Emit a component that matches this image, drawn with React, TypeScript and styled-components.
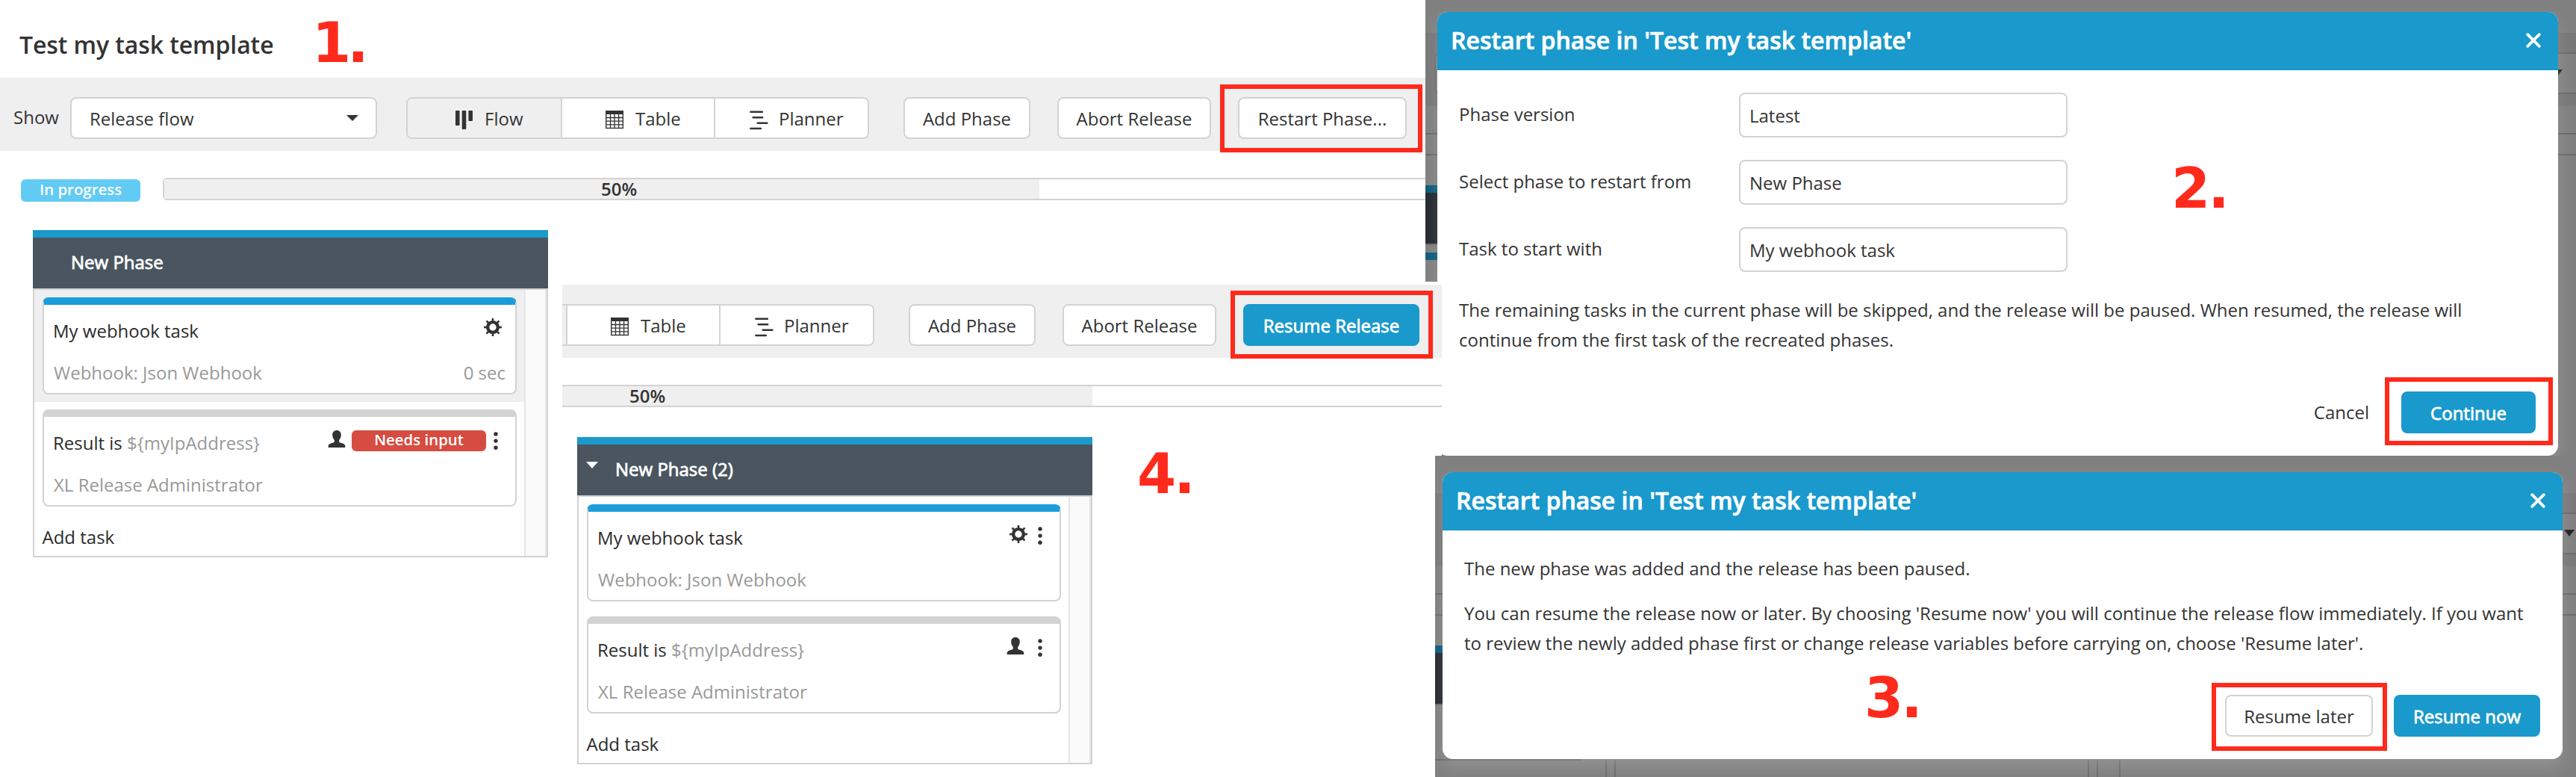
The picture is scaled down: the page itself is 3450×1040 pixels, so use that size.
import React from "react";
import styled, { createGlobalStyle, css } from "styled-components";

const c = {
  text: "#333333",
  muted: "#999999",
  border: "#d3d3d3",
  panel: "#efefef",
  blue: "#1999cc",
  bar: "#1b9dda",
  slate: "#4a5560",
  red: "#ff2a1c",
  overlay: "#808080",
  overlayLine: "#6a6a6a",
};

const GlobalStyle = createGlobalStyle`
  *, *::before, *::after { box-sizing: border-box; }
  body {
    margin: 0;
    background: #fff;
    color: ${c.text};
    font: 24px/40px "Open Sans", "Noto Sans", sans-serif;
  }
  p { margin: 0; }
`;

const strong = css`
  -webkit-text-stroke: 0.8px currentColor;
`;

/* ---------- canvas with the overlapping windows ---------- */

const Canvas = styled.main`
  position: relative;
  width: 3450px;
  height: 1040px;
  overflow: hidden;
  background: #fff;
  white-space: nowrap;
`;

const Window = styled.section<{ $x: number; $y: number; $w: number; $h: number }>`
  position: absolute;
  left: ${(p) => p.$x}px;
  top: ${(p) => p.$y}px;
  width: ${(p) => p.$w}px;
  height: ${(p) => p.$h}px;
  overflow: hidden;
  background: #fff;
`;

const StepNumber = styled.span<{ $x: number; $y: number; $tight?: boolean }>`
  position: absolute;
  left: ${(p) => p.$x}px;
  top: ${(p) => p.$y}px;
  color: ${c.red};
  font: bold 75px/88px "DejaVu Sans", Verdana, sans-serif;
  letter-spacing: ${(p) => (p.$tight ? -5 : -3)}px;
`;

const Highlight = styled.div<{ $x: number; $y: number; $w: number; $h: number }>`
  position: absolute;
  left: ${(p) => p.$x}px;
  top: ${(p) => p.$y}px;
  width: ${(p) => p.$w}px;
  height: ${(p) => p.$h}px;
  border: 6px solid ${c.red};
`;

/* ---------- release page ---------- */

const TitleRow = styled.header`
  display: flex;
  align-items: center;
  height: 104px;
  padding: 15px 0 0 26px;
`;

const Title = styled.h1`
  margin: 0;
  font-size: 32px;
  font-weight: 600;
  letter-spacing: -0.1px;
  line-height: 44px;
`;

const Toolbar = styled.div`
  display: flex;
  align-items: flex-start;
  height: 98px;
  padding-top: 26px;
  background: ${c.panel};
`;

const LowerToolbar = styled(Toolbar)`
  margin-top: 4px;
`;

const ShowLabel = styled.label`
  width: 94px;
  padding-left: 18px;
  line-height: 54px;
`;

const Select = styled.div`
  display: flex;
  align-items: center;
  justify-content: space-between;
  width: 411px;
  height: 56px;
  margin-right: 39px;
  padding: 1px 23px 0 24px;
  border: 2px solid ${c.border};
  border-radius: 8px;
  background: #fff;
`;

const Caret = styled.i<{ $w: number; $h: number; $color: string }>`
  width: 0;
  height: 0;
  margin-bottom: 2px;
  border: solid transparent;
  border-width: ${(p) => p.$h}px ${(p) => p.$w / 2}px 0;
  border-top-color: ${(p) => p.$color};
`;

const ViewSwitch = styled.div`
  display: flex;
  height: 56px;
  overflow: hidden;
  border: 2px solid ${c.border};
  border-radius: 8px;
  background: #fff;
`;

const ViewSwitchTail = styled(ViewSwitch)`
  border-left: 0;
  border-radius: 0 8px 8px 0;
`;

const ViewTab = styled.div<{ $w: number; $active?: boolean; $pad: number; $gap: number }>`
  display: flex;
  align-items: center;
  width: ${(p) => p.$w}px;
  padding: 2px 0 0 ${(p) => p.$pad}px;
  gap: ${(p) => p.$gap}px;
  background: ${(p) => (p.$active ? c.panel : "#fff")};
  & + & {
    border-left: 2px solid ${c.border};
  }
  svg {
    flex: none;
    margin-top: 3px;
  }
`;

const Button = styled.button<{ $w: number; $ml?: number; $primary?: boolean }>`
  width: ${(p) => p.$w}px;
  height: 56px;
  margin: 0 0 0 ${(p) => p.$ml ?? 0}px;
  padding: 1px 0 0;
  border: 2px solid ${(p) => (p.$primary ? c.blue : c.border)};
  border-radius: 8px;
  background: ${(p) => (p.$primary ? c.blue : "#fff")};
  color: ${(p) => (p.$primary ? "#fff" : c.text)};
  font: inherit;
  ${(p) => p.$primary && strong}
`;

const ProgressRow = styled.div<{ $pl: number }>`
  display: flex;
  align-items: center;
  height: 30px;
  margin-top: 36px;
  padding-left: ${(p) => p.$pl}px;
`;

const Pill = styled.span<{ $w: number; $h: number; $bg: string }>`
  width: ${(p) => p.$w}px;
  height: ${(p) => p.$h}px;
  border-radius: 6px;
  background: ${(p) => p.$bg};
  color: #fff;
  font-size: 20.4px;
  font-weight: 600;
  line-height: ${(p) => p.$h - 3}px;
  text-align: center;
`;

const StatusPill = styled(Pill)`
  margin: 4px 30px 0 0;
  line-height: 26px;
`;

const ProgressBar = styled.div<{ $open?: boolean }>`
  flex: 1;
  height: 30px;
  border: 2px solid ${c.border};
  border-right: 0;
  ${(p) => (p.$open ? "border-left: 0;" : "border-radius: 6px 0 0 6px;")}
`;

const ProgressFill = styled.div<{ $w: number; $pl: number }>`
  width: ${(p) => p.$w}px;
  height: 26px;
  padding-left: ${(p) => p.$pl}px;
  background: ${c.panel};
  font-weight: 600;
  line-height: 26px;
`;

/* ---------- phase column ---------- */

const PhaseBox = styled.div<{ $ml: number }>`
  width: 690px;
  margin: 40px 0 0 ${(p) => p.$ml}px;
`;

const PhaseHead = styled.div`
  display: flex;
  align-items: center;
  height: 78px;
  border-top: 10px solid ${c.blue};
  background: ${c.slate};
  color: #fff;
`;

const PhaseToggle = styled.span`
  display: flex;
  width: 51px;
  padding: 0 0 12px 12px;
`;

const PhaseName = styled.span`
  padding-bottom: 2px;
  ${strong}
`;

const PhaseBody = styled.div`
  display: flex;
  height: 360px;
  border: 2px solid ${c.border};
`;

const TaskList = styled.div`
  width: 656px;
`;

const Gutter = styled.div`
  flex: 1;
  border: solid #e6e6e6;
  border-width: 0 2px;
  background: #fafafa;
`;

const TaskSlot = styled.div<{ $current?: boolean }>`
  padding: 10px 10px 10px 11px;
  height: 150px;
  background: ${(p) => (p.$current ? c.panel : "#fff")};
`;

const Card = styled.div<{ $bar: string }>`
  width: 635px;
  height: 130px;
  border: 2px solid ${c.border};
  border-top: 10px solid ${(p) => p.$bar};
  border-radius: 8px;
  background: #fff;
`;

const CardTop = styled.div`
  display: flex;
  justify-content: space-between;
  height: 69px;
  padding-left: 12px;
  color: #2b2b2b;
  line-height: 69px;
`;

const CardBottom = styled.div`
  display: flex;
  justify-content: space-between;
  padding: 0 13px;
  color: ${c.muted};
  line-height: 43px;
`;

const Muted = styled.span`
  color: ${c.muted};
`;

const Actions = styled.div<{ $pr: number; $gap: number }>`
  display: flex;
  align-items: center;
  height: 60px;
  gap: ${(p) => p.$gap}px;
  padding-right: ${(p) => p.$pr}px;
`;

const NeedsInput = styled(Pill)`
  margin: 4px 2px 0 0;
`;

const IconSlot = styled.span`
  display: flex;
  margin-top: 3px;
`;

const AddTask = styled.div`
  padding: 5px 0 0 10.5px;
  color: #2b2b2b;
  line-height: 52px;
`;

/* ---------- dimmed page behind the dialogs ---------- */

const DimPage = styled.div<{ $top: number }>`
  display: flex;
  flex-direction: column;
  height: 100%;
  padding-top: ${(p) => p.$top}px;
  background: ${c.overlay};
`;

const DimToolbar = styled.div`
  display: flex;
  justify-content: space-between;
  flex: none;
  height: 98px;
  padding: 26px 0 0 12px;
  background: #787878;
`;

const DimButton = styled.div`
  width: 120px;
  height: 56px;
  border: 2px solid #6e6e6e;
  border-radius: 8px;
  background: ${c.overlay};
`;

const DimSelect = styled.div<{ $pr: number }>`
  display: flex;
  justify-content: flex-end;
  align-items: center;
  width: 300px;
  height: 56px;
  padding-right: ${(p) => p.$pr}px;
  border: solid ${c.overlayLine};
  border-width: 2px 0;
  background: ${c.overlay};
`;

const DimProgress = styled.div`
  flex: none;
  height: 30px;
  margin-top: 36px;
  border: solid ${c.overlayLine};
  border-width: 2px 0;
`;

const DimPhase = styled.div`
  flex: none;
  width: 196px;
  height: 154px;
  margin-top: 40px;
  border-bottom: 2px solid ${c.overlayLine};
`;

const DimPhaseHead = styled.div`
  height: 80px;
  border-top: 10px solid #0e5c7b;
  border-bottom: 2px solid ${c.overlayLine};
  background: #252a30;
`;

const DimCard = styled.div`
  height: 10px;
  margin-top: 10px;
  background: #0e5c7b;
`;

const DimColumns = styled.div`
  display: flex;
  flex: 1;
`;

const DimColumn = styled.div<{ $w: number }>`
  width: ${(p) => p.$w}px;
  border-right: 2px solid #6c6c6c;
`;

/* ---------- dialog ---------- */

const Dialog = styled.div<{ $x: number; $y: number; $w: number; $h: number }>`
  position: absolute;
  left: ${(p) => p.$x}px;
  top: ${(p) => p.$y}px;
  width: ${(p) => p.$w}px;
  height: ${(p) => p.$h}px;
  overflow: hidden;
  border-radius: 14px;
  background: #fff;
  box-shadow: 0 10px 20px rgba(255, 255, 255, 0.15);
`;

const DialogHead = styled.div`
  display: flex;
  align-items: center;
  justify-content: space-between;
  height: 78px;
  padding: 0 23px 2px 18px;
  background: ${c.blue};
  color: #fff;
`;

const DialogTitle = styled.h2`
  margin: 0;
  font-size: 32px;
  font-weight: 600;
  line-height: 44px;
  -webkit-text-stroke: 0.7px currentColor;
`;

const Form = styled.div`
  display: flex;
  flex-direction: column;
  gap: 30px;
  padding: 30px 0 0 29px;
`;

const FormRow = styled.div`
  display: flex;
  align-items: center;
  height: 60px;
`;

const FormLabel = styled.label`
  width: 375px;
  padding-bottom: 2px;
`;

const Field = styled.div`
  width: 440px;
  height: 60px;
  padding-left: 12px;
  border: 2px solid ${c.border};
  border-radius: 8px;
  line-height: 57px;
`;

const Copy = styled.div`
  display: flex;
  flex-direction: column;
  gap: 20px;
  padding: 31px 0 0 29px;
`;

const Footer = styled.div`
  display: flex;
  justify-content: flex-end;
  align-items: center;
  margin-top: 49px;
  padding-right: 30px;
`;

const Cancel = styled.span`
  margin-right: 43px;
`;

/* ---------- icons ---------- */

const FlowIcon = () => (
  <svg width="23" height="25" viewBox="0 0 23 25" fill={c.text}>
    <rect x="0" y="0" width="5.6" height="20" rx="1" />
    <rect x="8.7" y="0" width="5.6" height="25" rx="1" />
    <rect x="17.4" y="0" width="5.6" height="14" rx="1" />
  </svg>
);

const TableIcon = () => (
  <svg width="24" height="25" viewBox="0 0 24 25" fill="none" stroke={c.text}>
    <rect x="0.7" y="0.7" width="22.6" height="22.8" strokeWidth="1.4" />
    <rect x="0" y="0" width="24" height="5" fill={c.text} stroke="none" />
    <path d="M6.5 4v20M12 4v20M17.6 4v20M0 9.5h24M0 14.2h24M0 18.9h24" strokeWidth="1.3" />
  </svg>
);

const PlannerIcon = () => (
  <svg width="25" height="26" viewBox="0 0 25 26" stroke={c.text} strokeWidth="2.4" strokeLinecap="round">
    <path d="M1.3 1.8h15.6M4.6 9.2h12.6M10.6 16.7h12.8M1.3 24h13.6" />
  </svg>
);

const spokes = [0, 45, 90, 135, 180, 225, 270, 315];

const GearIcon = () => (
  <svg width="24" height="24" viewBox="0 0 24 24">
    <circle cx="12" cy="12" r="6.9" fill="none" stroke={c.text} strokeWidth="4.4" />
    {spokes.map((a) => (
      <rect key={a} x="10.7" y="0" width="2.6" height="4.5" fill={c.text} transform={`rotate(${a} 12 12)`} />
    ))}
  </svg>
);

const UserIcon = () => (
  <svg width="24" height="24" viewBox="0 0 24 24" fill={c.text}>
    <path d="M12 0c3.6 0 5.8 2.4 5.8 6 0 2.9-1 5.3-2.6 7v1.9c0 .9.6 1.3 1.6 1.6 3.7 1.1 6.5 2.1 6.5 4.6v1.9H.7v-1.9c0-2.5 2.8-3.5 6.5-4.6 1-.3 1.6-.7 1.6-1.6V13C7.2 11.3 6.2 8.9 6.2 6c0-3.6 2.2-6 5.8-6z" />
  </svg>
);

const DotsIcon = () => (
  <svg width="6" height="24" viewBox="0 0 6 24" fill={c.text}>
    <circle cx="3" cy="2.9" r="2.7" />
    <circle cx="3" cy="12.1" r="2.7" />
    <circle cx="3" cy="21.3" r="2.7" />
  </svg>
);

const CloseIcon = () => (
  <svg width="20" height="20" viewBox="0 0 20 20" stroke="#fff" strokeWidth="3.8" strokeLinecap="round">
    <path d="M2.2 2.2l15.6 15.6M17.8 2.2L2.2 17.8" />
  </svg>
);

/* ---------- composed parts ---------- */

const TableAndPlanner = () => (
  <>
    <ViewTab $w={205} $pad={58} $gap={16}>
      <TableIcon />
      Table
    </ViewTab>
    <ViewTab $w={206} $pad={46} $gap={14}>
      <PlannerIcon />
      Planner
    </ViewTab>
  </>
);

type PhaseProps = { name: string; x: number; running?: boolean };

const Phase = ({ name, x, running }: PhaseProps) => (
  <PhaseBox $ml={x}>
    <PhaseHead>
      <PhaseToggle>{!running && <Caret $w={17} $h={9} $color="#fff" />}</PhaseToggle>
      <PhaseName>{name}</PhaseName>
    </PhaseHead>
    <PhaseBody>
      <TaskList>
        <TaskSlot $current={running}>
          <Card $bar={c.bar}>
            <CardTop>
              <span>My webhook task</span>
              <Actions $pr={running ? 18 : 23} $gap={14}>
                <GearIcon />
                {!running && (
                  <IconSlot>
                    <DotsIcon />
                  </IconSlot>
                )}
              </Actions>
            </CardTop>
            <CardBottom>
              <span>Webhook: Json Webhook</span>
              {running && <span>0 sec</span>}
            </CardBottom>
          </Card>
        </TaskSlot>
        <TaskSlot>
          <Card $bar={c.border}>
            <CardTop>
              <span>
                Result is <Muted>{"${myIpAddress}"}</Muted>
              </span>
              <Actions $pr={23} $gap={running ? 8 : 18}>
                <UserIcon />
                {running && (
                  <NeedsInput $w={180} $h={28} $bg="#d64c41">
                    Needs input
                  </NeedsInput>
                )}
                <IconSlot>
                  <DotsIcon />
                </IconSlot>
              </Actions>
            </CardTop>
            <CardBottom>
              <span>XL Release Administrator</span>
            </CardBottom>
          </Card>
        </TaskSlot>
        <AddTask>Add task</AddTask>
      </TaskList>
      <Gutter />
    </PhaseBody>
  </PhaseBox>
);

const DimBackdrop = ({ top, caret, withCard }: { top: number; caret: number; withCard?: boolean }) => (
  <DimPage $top={top}>
    <DimToolbar>
      <DimButton />
      <DimSelect $pr={caret}>
        <Caret $w={15} $h={9} $color="#222" />
      </DimSelect>
    </DimToolbar>
    <DimProgress />
    <DimPhase>
      <DimPhaseHead />
      {withCard && <DimCard />}
    </DimPhase>
    {!withCard && (
      <DimColumns>
        <DimColumn $w={230} />
        <DimColumn $w={12} />
        <DimColumn $w={634} />
        <DimColumn $w={12} />
        <DimColumn $w={30} />
      </DimColumns>
    )}
  </DimPage>
);

const dialogTitle = "Restart phase in 'Test my task template'";

const fields = [
  ["Phase version", "Latest"],
  ["Select phase to restart from", "New Phase"],
  ["Task to start with", "My webhook task"],
];

export default function App() {
  return (
    <Canvas>
      <GlobalStyle />

      <Window $x={0} $y={0} $w={1909} $h={1040}>
        <TitleRow>
          <Title>Test my task template</Title>
        </TitleRow>
        <Toolbar>
          <ShowLabel>Show</ShowLabel>
          <Select>
            Release flow
            <Caret $w={16} $h={8} $color={c.text} />
          </Select>
          <ViewSwitch>
            <ViewTab $w={205} $pad={64} $gap={16} $active>
              <FlowIcon />
              Flow
            </ViewTab>
            <TableAndPlanner />
          </ViewSwitch>
          <Button $w={170} $ml={46}>Add Phase</Button>
          <Button $w={206} $ml={36}>Abort Release</Button>
          <Button $w={226} $ml={36}>Restart Phase...</Button>
        </Toolbar>
        <ProgressRow $pl={28}>
          <StatusPill $w={160} $h={30} $bg="#62cbf3">In progress</StatusPill>
          <ProgressBar>
            <ProgressFill $w={1172} $pl={585}>50%</ProgressFill>
          </ProgressBar>
        </ProgressRow>
        <Phase name="New Phase" x={44} running />
      </Window>

      <Window $x={1909} $y={0} $w={1541} $h={610}>
        <DimBackdrop top={44} caret={18} withCard />
        <Dialog $x={16} $y={16} $w={1501} $h={594}>
          <DialogHead>
            <DialogTitle>{dialogTitle}</DialogTitle>
            <CloseIcon />
          </DialogHead>
          <Form>
            {fields.map(([label, value]) => (
              <FormRow key={label}>
                <FormLabel>{label}</FormLabel>
                <Field>{value}</Field>
              </FormRow>
            ))}
          </Form>
          <Copy>
            <p>
              The remaining tasks in the current phase will be skipped, and the release will be paused. When resumed, the
              release will
              <br />
              continue from the first task of the recreated phases.
            </p>
          </Copy>
          <Footer>
            <Cancel>Cancel</Cancel>
            <Button $w={180} $primary>Continue</Button>
          </Footer>
        </Dialog>
      </Window>

      <Window $x={753} $y={377} $w={1178} $h={663}>
        <LowerToolbar>
          <ViewSwitchTail>
            <ViewTab $w={5} $pad={0} $gap={0} $active />
            <TableAndPlanner />
          </ViewSwitchTail>
          <Button $w={170} $ml={46}>Add Phase</Button>
          <Button $w={206} $ml={36}>Abort Release</Button>
          <Button $w={236} $ml={36} $primary>Resume Release</Button>
        </LowerToolbar>
        <ProgressRow $pl={0}>
          <ProgressBar $open>
            <ProgressFill $w={710} $pl={90}>50%</ProgressFill>
          </ProgressBar>
        </ProgressRow>
        <Phase name="New Phase (2)" x={20} />
      </Window>

      <Window $x={1922} $y={610} $w={1528} $h={430}>
        <DimBackdrop top={50} caret={2} />
        <Dialog $x={10} $y={22} $w={1500} $h={384}>
          <DialogHead>
            <DialogTitle>{dialogTitle}</DialogTitle>
            <CloseIcon />
          </DialogHead>
          <Copy>
            <p>The new phase was added and the release has been paused.</p>
            <p>
              You can resume the release now or later. By choosing 'Resume now' you will continue the release flow
              immediately. If you want
              <br />
              to review the newly added phase first or change release variables before carrying on, choose 'Resume
              later'.
            </p>
          </Copy>
          <Footer>
            <Button $w={198}>Resume later</Button>
            <Button $w={196} $ml={28} $primary>Resume now</Button>
          </Footer>
        </Dialog>
      </Window>

      <StepNumber $x={418} $y={13} $tight>1.</StepNumber>
      <StepNumber $x={2908} $y={208}>2.</StepNumber>
      <StepNumber $x={2497} $y={890}>3.</StepNumber>
      <StepNumber $x={1523} $y={590}>4.</StepNumber>

      <Highlight $x={1634} $y={113} $w={271} $h={91} />
      <Highlight $x={1648} $y={389} $w={271} $h={91} />
      <Highlight $x={3194} $y={505} $w={225} $h={91} />
      <Highlight $x={2962} $y={914} $w={235} $h={91} />
    </Canvas>
  );
}
